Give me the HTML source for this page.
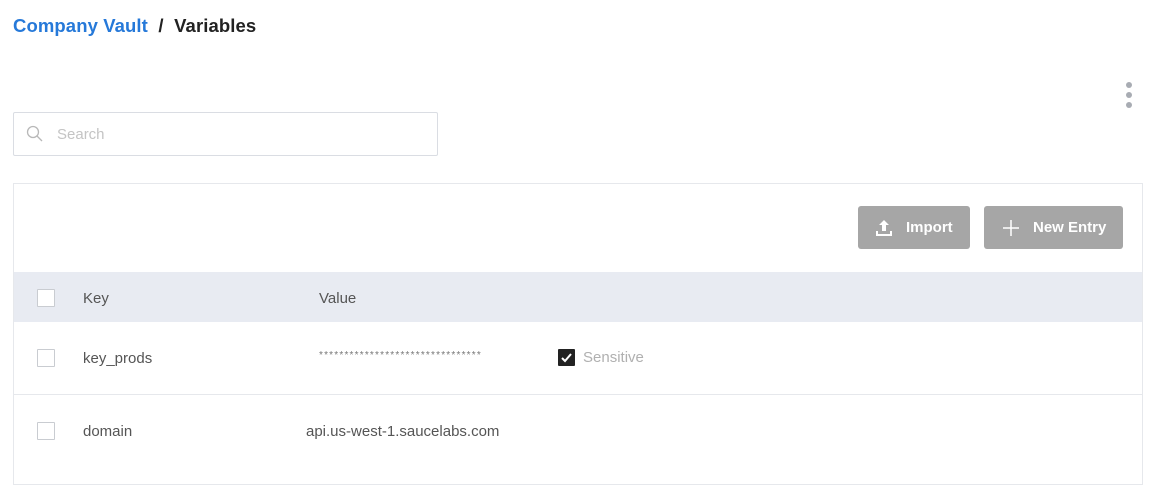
<!DOCTYPE html>
<html><head><style>
body{margin:0;width:1154px;height:464px;background:#fff;font-family:"Liberation Sans",sans-serif;position:relative;overflow:hidden}
.a{position:absolute}
.cb{position:absolute;width:16px;height:16px;border:1px solid #c9ccd1;background:#fff;border-radius:1px}
.btn{position:absolute;top:206px;height:43px;background:#a6a6a6;border-radius:3px;color:#fff;font-size:15px;font-weight:bold;line-height:43px}
.dot{position:absolute;left:1126px;width:6px;height:6px;border-radius:50%;background:#a8acb3}
</style></head><body>
<div class="a" style="left:13px;top:15px;font-size:18.5px;font-weight:bold;letter-spacing:0.1px"><span style="color:#2679d9">Company Vault</span><span style="color:#222;"> &nbsp;/&nbsp; Variables</span></div>
<div class="dot" style="top:82px"></div><div class="dot" style="top:92px"></div><div class="dot" style="top:102px"></div>
<div class="a" style="left:13px;top:112px;width:423px;height:42px;border:1px solid #dadde3;border-radius:2px"></div>
<svg class="a" style="left:26px;top:125px" width="18" height="18" viewBox="0 0 18 18"><circle cx="7" cy="7" r="5.5" fill="none" stroke="#b8b8b8" stroke-width="1.3"/><path d="M11 11l5 5" stroke="#b8b8b8" stroke-width="1.3"/></svg>
<div class="a" style="left:57px;top:126px;font-size:15px;color:#c4c4c4">Search</div>
<div class="a" style="left:13px;top:183px;width:1128px;height:300px;border:1px solid #e6e8ec"></div>
<div class="btn" style="left:858px;width:112px"><svg class="a" style="left:18px;top:13px" width="16" height="18" viewBox="0 0 16 18"><path d="M8 1l-5 5h3v6h4V6h3z" fill="#fff"/><path d="M1 12v4h14v-4" fill="none" stroke="#fff" stroke-width="2"/></svg><span class="a" style="left:48px">Import</span></div>
<div class="btn" style="left:984px;width:139px"><svg class="a" style="left:18px;top:13px" width="18" height="18" viewBox="0 0 18 18"><path d="M9 1v16M1 9h16" stroke="#fff" stroke-width="1.5"/></svg><span class="a" style="left:49px">New Entry</span></div>
<div class="a" style="left:14px;top:272px;width:1128px;height:50px;background:#e8ebf2"></div>
<div class="cb" style="left:37px;top:289px"></div>
<div class="a" style="left:83px;top:290px;font-size:15px;color:#555">Key</div>
<div class="a" style="left:319px;top:290px;font-size:15px;color:#555">Value</div>
<div class="cb" style="left:37px;top:349px"></div>
<div class="a" style="left:83px;top:350px;font-size:15px;color:#555">key_prods</div>
<div class="a" style="left:319px;top:350px;font-size:10px;color:#777;letter-spacing:1.2px">********************************</div>
<div class="a" style="left:558px;top:349px;width:17px;height:17px;background:#222;border-radius:1px"><svg width="17" height="17" viewBox="0 0 17 17"><path d="M4 9l3 3 6-7" fill="none" stroke="#fff" stroke-width="2"/></svg></div>
<div class="a" style="left:583px;top:349px;font-size:15px;color:#b0b0b0">Sensitive</div>
<div class="a" style="left:14px;top:394px;width:1128px;height:1px;background:#e6e8ec"></div>
<div class="cb" style="left:37px;top:422px"></div>
<div class="a" style="left:83px;top:423px;font-size:15px;color:#555">domain</div>
<div class="a" style="left:306px;top:423px;font-size:15px;color:#555">api.us-west-1.saucelabs.com</div>
</body></html>
